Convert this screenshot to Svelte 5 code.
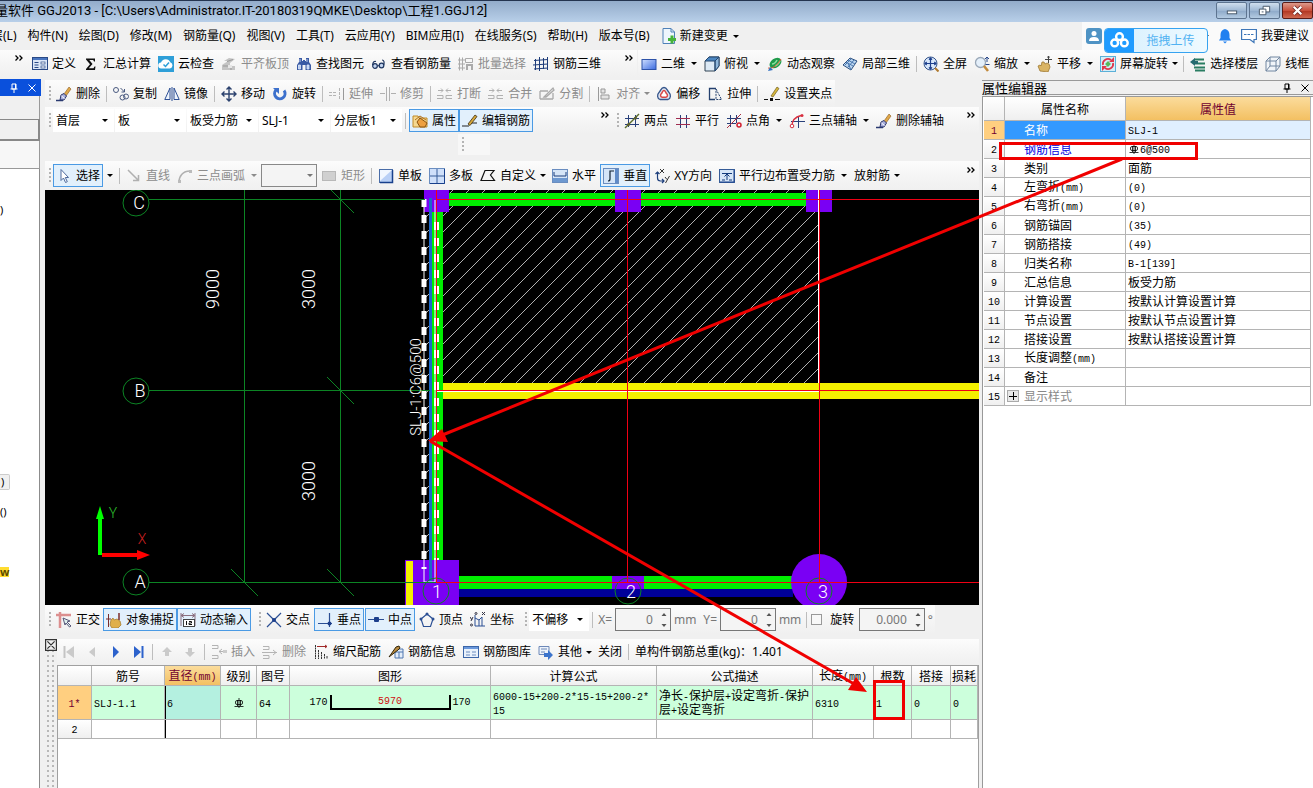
<script>
  const icons = {
    define: '<rect x=".5" y="1.500" width="15" height="12" fill="#dbe6f7" stroke="#2b4a86"/><rect x="1" y="2" width="14" height="2" fill="#4a76c0"/><path d="M2.500 6.500h4m-4 2.500h4m-4 2.500h4" stroke="#2b4a86"/><rect x="9" y="6" width="4" height="2" fill="#fff" stroke="#2b4a86" stroke-width=".7"/><rect x="9" y="10" width="4" height="2" fill="#fff" stroke="#2b4a86" stroke-width=".7"/>',
    sigma: '<path d="M3 2.500h9v3h-1l-.8-1.500H6.300L9.500 8l-3.700 4.200h4.700l1-1.700h1l-.5 3.500H3v-1L7 8.300 3 3.500z" fill="#111"/>',
    cloud: '<rect width="16" height="16" fill="#2e9fd8"/><path d="M3.500 12.500a3 3 0 0 1-.5-6 5 5 0 0 1 9.300-.3 3.300 3.300 0 0 1-.3 6.300z" fill="#fff"/><path d="M5.500 8.500l2 2 3.500-4" fill="none" stroke="#2e9fd8" stroke-width="1.500"/>',
    level: '<path d="M1 14V9l6-4h-4l5-3 6 1-5 4v3h5v4z" fill="#c4c4c4"/><path d="M2 10h8v4M6 5.500l6-2" stroke="#999" fill="none"/><rect x="7" y="9" width="4" height="3" fill="#e6e6e6"/>',
    find: '<path d="M3 2h3v3h1V4h2v1h1V2h3v4l2 3v5H9.500V9h-3v5H1V9l2-3z" fill="#3a5aa4"/><path d="M2.500 9h2v4h-2zM11 9h2v4h-2zM4 3v3M11 3v3" fill="#b9cff2" stroke="#dfe9fa" stroke-width=".8"/>',
    glasses: '<g fill="#c4d5f0" stroke="#1d3560" stroke-width="1.200"><circle cx="4" cy="10" r="2.300"/><circle cx="10.500" cy="9.500" r="2.300"/><path d="M6.300 10l2-.5M1.600 9C2 6 3 5 5 5.500M12.800 9c.7-3 .2-5-1.800-5" fill="none"/></g>',
    batch: '<g fill="none" stroke="#aaa"><path d="M1.500 1.500v13M4.500 1.500v13M0 4h7M0 8h7M0 12h7M7.500 2.500h7v4h-7z"/><path d="M9 14V9h5v5" stroke-width="2"/></g>',
    cage: '<path d="M2.500 3v11M6.500 1v14M10.500 2v11M14.500 1v13M1 4.500l14-1M0 9l15-1M1 13l14-1" stroke="#1e3c7a" fill="none"/>',
    rect2d: '<defs><linearGradient id="g2" x2="1" y2="1"><stop stop-color="#cfdfff"/><stop offset="1" stop-color="#3b6be0"/></linearGradient></defs><rect x="1" y="3.500" width="14" height="10" fill="url(#g2)" stroke="#2d52a8"/>',
    cube: '<path d="M1 5l4-4h10v9l-4 5H1z" fill="#dce9f5" stroke="#345"/><path d="M1 5l4-4h10l-4 4z" fill="#4c86c0" stroke="#24466e"/><path d="M11 5v10M11 5l4-4v9l-4 5z" fill="#8fb6da" stroke="#24466e"/>',
    orbit: '<ellipse cx="8.500" cy="7" rx="6.500" ry="4.500" transform="rotate(-35 8.500 7)" fill="#1f9a4a"/><path d="M5 8c2 0 4-2 5-4M8 10c3-1 4-3 5-5" stroke="#8ce0a0" stroke-width="1.500" fill="none"/><path d="M1 12c4 1 9-2 13-9" stroke="#e2603a" fill="none"/><path d="M1 15l5-1-3-3z" fill="#2f6fc0"/>',
    local3d: '<path d="M1 9l7-7 7 3-6 9z" fill="#bcd6f0" stroke="#2a4f80"/><path d="M4 6l7 4M6 4l7 4M3 9l6-6M6 11l6-7M9 14l-3-7" stroke="#4a78b0" fill="none"/>',
    full: '<circle cx="7.500" cy="7.500" r="6.500" fill="#d9e8fb" stroke="#35558c"/><path d="M7.500 2v11M2 7.500h11M6 3.700L7.500 2 9 3.700M6 11.300L7.500 13 9 11.300M3.700 6L2 7.500 3.700 9M11.300 6L13 7.500 11.300 9" stroke="#1d3f8c" fill="none" stroke-width="1.200"/><path d="M12 12l3.500 3.500" stroke="#b07a30" stroke-width="2"/>',
    zoomi: '<circle cx="6.500" cy="6.500" r="5" fill="#e4effa" stroke="#9aa8b8" stroke-width="1.300"/><path d="M10 10l4 5" stroke="#c28a3c" stroke-width="2.500"/><path d="M13 1v5M11 3l2-2 2 2M11.500 8.500h4" stroke="#26468a" fill="none"/>',
    pan: '<path d="M3 15l-2-5 2-1 1 1 1-4 2 0 1 2 2-1 2 1 1 3-2 5z" fill="#d9b465" stroke="#a07a34" stroke-width=".8"/><path d="M11.500 0v7M8 3.500h7M10.500 1.500l1-1.500 1 1.500" stroke="#444" fill="none"/>',
    srot: '<rect x=".5" y=".5" width="15" height="15" fill="#d5eef8" stroke="#5bb0d8"/><path d="M3 9a5 5 0 0 1 8-5M13 7a5 5 0 0 1-8 5" stroke="#e0384c" stroke-width="1.800" fill="none"/><path d="M9 6h5V1zM7 10H2v5z" fill="#e0384c"/><path d="M6.500 9.500l3-3" stroke="#57ba5a" stroke-width="4"/>',
    floors: '<path d="M4 3.500h10M5 7.500h10M4 11.500h11M5 14.500h10" stroke="#2a7d62" stroke-width="2"/><path d="M0 6l5-4v3h3v3H5v2z" fill="#256a70"/>',
    wire: '<g fill="#f1f5f9" stroke="#7186a0"><path d="M1 5l4-4h10v9l-4 5H1z"/><path d="M1 5h10v10M11 5l4-4M5 1v9h10M5 10l-4 5" fill="none"/></g>',
    erase: '<path d="M8 8l5-7 2 2-5 7z" fill="#e0a848" stroke="#8a5a20" stroke-width=".6"/><path d="M5 9l3-1.500L10.500 10 8 14H4z" fill="#a9b0de" stroke="#30386c"/><path d="M5.500 10l3 2.500" stroke="#fff"/><path d="M0 14.500h7" stroke="#2a3a70" stroke-width="1.500"/>',
    copy: '<g fill="none" stroke="#4a5a80"><circle cx="3" cy="4" r="2.500"/><circle cx="9.500" cy="11.500" r="2.500"/><circle cx="13" cy="10.500" r="2.500"/><path d="M7.500 2l4 4m0-3v3H8.500"/></g>',
    mirror: '<path d="M6 2v11.500H.8zM10 2v11.500h5.200z" fill="#eef4fc" stroke="#2d4f94"/><path d="M8 1v14" stroke="#2d4f94"/>',
    move: '<path d="M8 1v14M1 8h14M5.500 3.500L8 1l2.500 2.500M5.500 12.500L8 15l2.500-2.500M3.500 5.500L1 8l2.500 2.500M12.500 5.500L15 8l-2.500 2.500" fill="none" stroke="#2c426e" stroke-width="1.400"/>',
    rotate: '<path d="M4 4a5.200 5.200 0 1 0 8 .5" fill="none" stroke="#3c70cc" stroke-width="3"/><path d="M1 2h6v6z" fill="#3c70cc"/>',
    extend: '<path d="M0 6.500h8M0 9.500h8M10.500 2v12" stroke="#b4b4b4" fill="none" stroke-dasharray="3 1"/><path d="M14.500 2v12" stroke="#999"/>',
    trim: '<path d="M0 7.500h5M6.500 1v14M9.500 1v14M11 7.500h5" stroke="#b0b0b0" fill="none"/>',
    brk: '<path d="M1 4.500h5M9 4.500h5M4 2.500l2 2-2 2M11 2.500l-2 2 2 2M0 9.500h6v3H0M15 9.500H9v3h6" stroke="#b0b0b0" fill="none"/>',
    split: '<path d="M1 5h8M1 13h13M1 5v8M14 7v6M5 11l9-9 1 2-8 7z" fill="none" stroke="#aaa" stroke-width="1.300"/>',
    align: '<path d="M2.500 1v14" stroke="#999"/><path d="M5 3h4v4H5zM5 9h8v4H5z" fill="#e4e4e4" stroke="#999"/>',
    offset: '<path d="M8 1.500c3 0 3 3 5 5s2 6-1 7H4c-3-1-3-5-1-7s2-5 5-5z" fill="#dfe6f2" stroke="#36568c" stroke-width="1.300"/><path d="M8 4.500c1.500 0 1.500 2 2.800 3.300s.5 3.500-1 3.500H6.200c-1.500 0-2.300-2.200-1-3.500S6.500 4.500 8 4.500z" fill="#fff" stroke="#d84848" stroke-width="1.500"/>',
    stretch: '<path d="M9 2.500H2.500v11H8" fill="none" stroke="#24406e" stroke-width="1.300"/><path d="M9 3l5.500 10.500H9z" fill="none" stroke="#24406e" stroke-dasharray="2 1"/>',
    grip: '<path d="M7 10l6-9 2 1.500L9 11z" fill="#d7b73c" stroke="#5a4a10" stroke-width=".6"/><rect x="6" y="12" width="3" height="3" fill="#111"/><path d="M0 13.500h4M11 13.500h5" stroke="#111"/>',
    prop: '<path d="M1 3h5l1 2h8v9H1z" fill="#f5d890" stroke="#c08a28"/><path d="M5 9l3-4 7 5-2 4H8z" fill="#eda040" stroke="#8a5410"/><path d="M3 7l5-4 6 4" stroke="#b07020" fill="none"/>',
    edit: '<path d="M0 13h7M9 10l6 0" stroke="#222"/><path d="M6 11l7-9 2 1.500L8 12.500z" fill="#d7a93c" stroke="#3c2c10" stroke-width=".8"/>',
    twopt: '<path d="M4.500 2v12M11.500 2v12M1 5.500h14M1 11.500h14" stroke="#28407a" fill="none"/><path d="M1 15L15 1" stroke="#5b6c2c" stroke-width="1.500"/><circle cx="4.500" cy="11.500" r="1.500" fill="#5b5c2c"/><circle cx="11.500" cy="5" r="1.500" fill="#5b5c2c"/>',
    par: '<path d="M5.500 2v13M11.500 2v13" stroke="#28407a" fill="none"/><path d="M1 5.500h14M1 11.500h14" stroke="#a02c50"/>',
    ang: '<path d="M4.500 2v12M10.500 2v8M1 5.500h14M1 10.500h9" stroke="#28407a" fill="none"/><path d="M1 15L15 1" stroke="#a83040"/><circle cx="13" cy="12" r="2" fill="none" stroke="#d02030" stroke-width="1.500"/>',
    arc3: '<path d="M9.500 3v12M2 8.500h14" stroke="#28407a"/><path d="M3 13C3 7 6 4 12 2.500" stroke="#d83040" fill="none" stroke-width="1.300"/><circle cx="3" cy="13" r="1.800" fill="#fff" stroke="#d83040"/><circle cx="13" cy="2.500" r="1.500" fill="#d83040"/>',
    arrow: '<path d="M5 1.500v11l2.500-2.500 2 4.500 1.800-.8-2-4.200h3.200z" fill="#fff" stroke="#4e6a9c"/>',
    line: '<path d="M2 2l10 10M12.500 7v5.500H7" stroke="#b0b0b0" stroke-width="1.500" fill="none"/>',
    arc: '<path d="M2 14C2 8 6 3 13 3" stroke="#b0b0b0" stroke-width="1.500" fill="none"/><rect x="1" y="12" width="3" height="3" fill="#bbb"/><rect x="12" y="2" width="3" height="3" fill="#bbb"/>',
    grect: '<rect x="1.500" y="3.500" width="13" height="9" fill="#d0d0d0" stroke="#b8b8b8"/>',
    single: '<rect x="1.500" y="1.500" width="13" height="13" fill="#b9d0f6" stroke="#4a6da8"/><path d="M14.500 2v12.500H2" stroke="#18408c" stroke-width="1.500" fill="none"/><path d="M2 2h12L2 13z" fill="#f1f7ff"/>',
    multi: '<rect x=".5" y=".5" width="15" height="15" fill="#cfe0fa" stroke="#6a8dc0"/><path d="M8 1v14M1 8h14" stroke="#365c98"/><path d="M15.500 1v14.500H1" stroke="#18408c" fill="none"/>',
    custom: '<path d="M5 2.500h9L10.500 7l4 5.500H1z" fill="none" stroke="#111" stroke-width="1.200"/>',
    horiz: '<rect x=".5" y="1.500" width="15" height="13" fill="#d6e5f7" stroke="#6a8dc0"/><path d="M2 4v4h12V4" stroke="#1d3f7c" fill="none"/><rect x="1" y="10" width="14" height="4" fill="#6d98d0"/>',
    vert: '<rect x=".5" y=".5" width="15" height="15" fill="#d5e5f8" stroke="#6a8dc0"/><path d="M11 3H7v8q0 2-2 2" stroke="#123" fill="none" stroke-width="1.200"/><rect x="12" y="1" width="3" height="14" fill="#5f8bc8"/>',
    xy: '<path d="M3.500 4v6q0 3 3 3h3M1.500 6l2-2 2 2M8 11l2 2-2 2" stroke="#1d3f7c" fill="none" stroke-width="1.200"/><path d="M6 1l4 4M10 1L6 5M11 9l2 2.500M15.500 8l-4 7" stroke="#333" fill="none"/>',
    edges: '<rect x=".5" y="1.500" width="15" height="13" fill="#d6e5f7" stroke="#365c98"/><path d="M3 5.500h10M8 6v6M5.500 8.500L8 6l2.500 2.500M3 12h3m4 0h3" stroke="#123a7c" fill="none"/><path d="M15 2v12H1" stroke="#18408c" fill="none"/>',
    ortho: '<path d="M0 3h15M4 0v16" stroke="#dc8f8f" stroke-width="2.500"/><path d="M7 6l7 3-3 1 4 4-1.500 1-3.500-4-1 2z" fill="#dff0ee" stroke="#557"/>',
    osnap: '<path d="M2.500 2v13M0 7h5" stroke="#7a2c2c"/><path d="M4 13l1-5 2-2 1 2 3-1 3 2 1 4-3 3H6z" fill="#e0b04a" stroke="#a88034" stroke-width=".8"/><path d="M13 1v7" stroke="#7a2c2c" stroke-width="1.500"/>',
    dyn: '<path d="M1 1v13M15 1v13M1 3.500h14M4 1.500L1 3.500l3 2M12 1.500l3 2-3 2" stroke="#8c7080" fill="none"/><rect x="3.500" y="7.500" width="11" height="7" fill="#fff" stroke="#444"/><path d="M6.500 9v4M9 9.500h2.500v1.500H9v1.500h3" stroke="#111" fill="none"/>',
    cross: '<path d="M1 1l14 14M15 1L1 15" stroke="#2b4f94" stroke-width="1.200"/><circle cx="8" cy="8" r="2" fill="#1d3f8c"/>',
    perp: '<path d="M12.500 1v14M1 11.500h14" stroke="#2b4f94" stroke-width="1.200"/><circle cx="12.500" cy="11.500" r="2" fill="#1d3f8c"/>',
    mid: '<path d="M0 7.500h16" stroke="#2b4f94"/><rect x="6" y="5" width="5" height="5" rx="1" fill="#1d3f8c"/>',
    vertex: '<path d="M8 2l6 5-2.500 7.500h-7L2 7z" fill="none" stroke="#2b4f94" stroke-width="1.200"/><g fill="#2b4f94"><circle cx="8" cy="2" r="1.500"/><circle cx="14" cy="7" r="1.500"/><circle cx="2" cy="7" r="1.500"/></g>',
    coord: '<path d="M5 3v11h10M5 6l4 2 3-3M9 8v6M12 5v9" stroke="#2b4f94" fill="none"/><g fill="none" stroke="#334"><circle cx="1.500" cy="13" r="1"/><circle cx="6" cy="1.500" r="1"/><path d="M0 5l2 3M3 5L1 9M12 0l3 3M15 0l-3 3"/></g>',
    first: '<path d="M3.500 2v12" stroke="#c4c4c4" stroke-width="2"/><path d="M13 2v12L5 8z" fill="#cacaca"/>',
    prev: '<path d="M11 3v10L5 8z" fill="#cacaca"/>',
    next: '<path d="M6 2v12l6-6z" fill="#2c62cc"/>',
    last: '<path d="M12.500 2v12" stroke="#2c62cc" stroke-width="2"/><path d="M4 2v12l7-6z" fill="#2c62cc"/>',
    up: '<path d="M8 3l5 5h-3v4H6V8H3z" fill="#cacaca"/>',
    down: '<path d="M8 13l5-5h-3V4H6v4H3z" fill="#cacaca"/>',
    insert: '<path d="M1 1.500h6v3H1M1 11.500h6v3H1M16 7.500H8M11 5L8 7.500 11 10" stroke="#b4b4b4" fill="none"/><rect x="12" y="6" width="4" height="3" fill="#ccc"/>',
    remove: '<path d="M1 2.500h6v3H1M1 11.500h6v3H1M0 8.500h15M11 6l3 2.500-3 2.500" stroke="#b4b4b4" fill="none"/>',
    scale: '<path d="M2.500 1v14M5.500 6v9M8.500 8v7M11.500 10v5M14 12v3" stroke="#333" stroke-dasharray="2 .5"/><path d="M4 2.500h10M12 1l2 1.500L12 4" stroke="#a02828" fill="none"/>',
    info: '<path d="M7 5h8v9H7zM7 8h8M11 8v6" fill="#e3edf9" stroke="#4f77b0"/><path d="M1 13L8 3l3-1 1 2-2 2z" fill="#b88a40" stroke="#33270c"/>',
    lib: '<rect x=".5" y="2.500" width="15" height="11" fill="#e9f1fb" stroke="#3c66a8"/><rect x="1" y="3" width="14" height="2" fill="#6a98dc"/><path d="M3 8h4m2 0h4M3 11h4m2 0h4" stroke="#6a8cc0"/>',
    other: '<path d="M1 2.500h10v8H1zM3 5h6M3 8h4" fill="#edf3fb" stroke="#6d88b8"/><path d="M6 9h4V6l5 5-5 5v-3H6z" fill="#3c74cc"/>',
    newdoc: '<path d="M2 .5h8L13.500 4v11.500H2z" fill="#eef6fd" stroke="#4f81b8"/><path d="M10 .5V4h3.500" fill="none" stroke="#4f81b8"/><path d="M9.500 7.500h3v2.500H15v3h-2.500v2.500h-3V13H7v-3h2.500z" fill="#46b33a"/>',
    user: '<rect width="16" height="16" rx="3" fill="#4f93c4"/><circle cx="8" cy="5.500" r="2.500" fill="#fff"/><path d="M3 13q0-4 5-4t5 4z" fill="#fff"/>',
    bell: '<path d="M8 1q4.500 1 4.500 6v3l1.500 2.500H2L3.500 10V7Q3.500 2 8 1z" fill="#2080f0"/><path d="M6 13.500h4L8 15.500z" fill="#2080f0"/>',
    bubble: '<path d="M.6 1.500h14.800v10H13v3l-4-3H.6z" fill="#fff" stroke="#3f77b8" stroke-width="1.200"/><path d="M3 6.500h2.500m1 0H9m1 0h2.500" stroke="#3f77b8"/>'
  };

  const menus = ['层(L)', '构件(N)', '绘图(D)', '修改(M)', '钢筋量(Q)', '视图(V)', '工具(T)', '云应用(Y)', 'BIM应用(I)', '在线服务(S)', '帮助(H)', '版本号(B)'];

  // Entries: [icon, label, flags] — g: greyed, on: pressed, s: split arrow, m: menu arrow, o: arrow outside the frame
  const mainBar = [['define', '定义'], ['sigma', '汇总计算'], ['cloud', '云检查'], ['level', '平齐板顶', 'g'], ['find', '查找图元'], ['glasses', '查看钢筋量'], ['batch', '批量选择', 'g'], ['cage', '钢筋三维']];
  const viewBar = [['rect2d', '二维', 's'], ['cube', '俯视', 's'], ['orbit', '动态观察'], ['local3d', '局部三维'], null, ['full', '全屏'], ['zoomi', '缩放', 's'], ['pan', '平移', 's'], ['srot', '屏幕旋转', 'm'], null, ['floors', '选择楼层'], ['wire', '线框']];
  const editBar = [['erase', '删除'], null, ['copy', '复制'], ['mirror', '镜像'], null, ['move', '移动'], ['rotate', '旋转'], null, ['extend', '延伸', 'g'], ['trim', '修剪', 'g'], null, ['brk', '打断', 'g'], ['brk', '合并', 'g'], ['split', '分割', 'g'], null, ['align', '对齐', 'g m'], ['offset', '偏移'], ['stretch', '拉伸'], null, ['grip', '设置夹点']];
  const combos = [['楼层', '首层', 'short'], ['构件类型', '板', ''], ['构件', '板受力筋', ''], ['名称', 'SLJ-1', ''], ['分层', '分层板1', '']];
  const axisBar = [['twopt', '两点'], ['par', '平行'], ['ang', '点角', 's'], ['arc3', '三点辅轴', 's'], ['erase', '删除辅轴']];
  const drawA = [['arrow', '选择', 'on o'], null, ['line', '直线', 'g'], ['arc', '三点画弧', 'g s']];
  const drawB = [['grect', '矩形', 'g'], null, ['single', '单板'], ['multi', '多板'], ['custom', '自定义', 'm'], ['horiz', '水平'], ['vert', '垂直', 'on'], ['xy', 'XY方向'], ['edges', '平行边布置受力筋', 's'], ['', '放射筋', 'm']];
  const snapA = [['ortho', '正交'], ['osnap', '对象捕捉', 'on'], ['dyn', '动态输入', 'on']];
  const snapB = [['cross', '交点'], ['perp', '垂点', 'on'], ['mid', '中点', 'on'], ['vertex', '顶点'], ['coord', '坐标']];
  const rebarBar = [['first', ''], ['prev', ''], ['next', ''], ['last', ''], null, ['up', ''], ['down', ''], null, ['insert', '插入', 'g'], ['remove', '删除', 'g'], ['scale', '缩尺配筋'], ['info', '钢筋信息'], ['lib', '钢筋图库'], ['other', '其他', 'm'], ['', '关闭'], null];

  const props = [['名称', 'SLJ-1'], ['钢筋信息', 'Φ6@500'], ['类别', '面筋'], ['左弯折(mm)', '(0)'], ['右弯折(mm)', '(0)'], ['钢筋锚固', '(35)'], ['钢筋搭接', '(49)'], ['归类名称', 'B-1[139]'], ['汇总信息', '板受力筋'], ['计算设置', '按默认计算设置计算'], ['节点设置', '按默认节点设置计算'], ['搭接设置', '按默认搭接设置计算'], ['长度调整(mm)', ''], ['备注', ''], ['显示样式', '']];
  const cols = [['', 34], ['筋号', 73], ['直径(mm)', 56], ['级别', 36], ['图号', 33], ['图形', 201], ['计算公式', 166], ['公式描述', 156], ['长度(mm)', 61], ['根数', 38], ['搭接', 39], ['损耗', 0]];
  const runs = (t) => t.split(/([\x20-\x7e]+|Φ)/).filter(Boolean);
  const has = (f, k) => (f ?? '').split(' ').includes(k);
</script>

{#snippet icon(name)}
  <svg class="ic" viewBox="0 0 16 16" aria-hidden="true">{@html icons[name]}</svg>
{/snippet}

{#snippet caret()}
  <svg class="caret" viewBox="0 0 6 3" aria-hidden="true"><path d="M0 0h6L3 3z" fill="currentColor" /></svg>
{/snippet}

{#snippet bar(items)}
  {#each items as it}
    {#if it}
      <button class="item" class:grey={has(it[2], 'g')} class:on={has(it[2], 'on')}>
        {#if it[0]}{@render icon(it[0])}{/if}
        {#if it[1]}<span>{it[1]}</span>{/if}
        {#if has(it[2], 's')}<i class="split">{@render caret()}</i>{/if}
        {#if has(it[2], 'm')}<i class="drop">{@render caret()}</i>{/if}
      </button>
      {#if has(it[2], 'o')}<button class="item more" aria-label="更多">{@render caret()}</button>{/if}
    {:else}
      <span class="sep"></span>
    {/if}
  {/each}
{/snippet}

{#snippet chevrons()}
  <svg class="chev" viewBox="0 0 8 6" aria-hidden="true"><path d="M.5 .5L3 3 .5 5.500M4.500 .5L7 3 4.500 5.500" fill="none" stroke="#000" stroke-width="1.300" /></svg>
{/snippet}

{#snippet rebar()}
  <svg class="rebar" viewBox="0 0 12 12" aria-label="钢筋级别"><path d="M6 1v10M1.500 9.500h9M4.500 3v6M7.500 3v6" fill="none" stroke="#000" stroke-width=".8" /><rect x="2.500" y="3.500" width="7" height="4" rx="1.500" fill="none" stroke="#000" stroke-width=".8" /></svg>
{/snippet}

{#snippet song(t)}
  {#each runs(t) as r}{#if r === 'Φ'}{@render rebar()}{:else if /^[\x20-\x7e]/.test(r)}<span class="mono">{r}</span>{:else}{r}{/if}{/each}
{/snippet}

{#snippet spin(label, value, wide)}
  <span class="spin" class:wide>
    <input type="text" aria-label={label} {value} disabled />
    <svg viewBox="0 0 8 18" aria-hidden="true"><path d="M1.500 5L4 2l2.500 3zM1.500 13L4 16l2.500-3z" fill="#555" /></svg>
  </span>
{/snippet}

<div class="app">
  <header class="title">
    <h1>量软件 GGJ2013 - [C:\Users\Administrator.IT-20180319QMKE\Desktop\工程1.GGJ12]</h1>
    <div class="win">
      <button aria-label="最小化"><svg viewBox="0 0 30 16"><rect x="10.500" y="8.500" width="10" height="3" fill="#fff" stroke="#456" /></svg></button>
      <button aria-label="还原"><svg viewBox="0 0 30 16"><path d="M13.500 3.500h7v6h-7z" fill="#fff" stroke="#456" /><path d="M9.500 6.500h7v6h-7z" fill="#fff" stroke="#456" /><path d="M12 9h2v1h-2z" fill="#456" /></svg></button>
      <button class="close" aria-label="关闭窗口"><svg viewBox="0 0 30 16"><path d="M11 4l8 8M19 4l-8 8" stroke="#622" stroke-width="4" /><path d="M11 4l8 8M19 4l-8 8" stroke="#fff" stroke-width="2.500" /></svg></button>
    </div>
  </header>

  <nav class="menu">
    {#each menus as m}<button>{m}</button>{/each}
    <button class="new">{@render icon('newdoc')}<span>新建变更</span><i class="split">{@render caret()}</i></button>
    <div class="account">
      <button class="user" aria-label="用户">{@render icon('user')}{@render caret()}</button>
      <button aria-label="通知">{@render icon('bell')}</button>
      <button class="talk">{@render icon('bubble')}<span>我要建议</span></button>
      <button class="upload">
        <svg viewBox="0 0 30 24" aria-hidden="true"><g fill="none" stroke="#fff" stroke-width="2.500"><circle cx="15" cy="8" r="3.500" /><circle cx="10" cy="14.500" r="3.500" /><circle cx="20" cy="14.500" r="3.500" /></g></svg>
        <span>拖拽上传</span>
      </button>
    </div>
  </nav>

  <div class="bar top">
    <div class="part lead">{@render chevrons()}</div>
    <div class="part first">{@render bar(mainBar)}<span class="push">{@render chevrons()}</span></div>
    <div class="part view">{@render bar(viewBar)}</div>
  </div>

  <div class="body">
    <aside class="side">
      <div class="cap">
        <svg viewBox="0 0 10 10" aria-hidden="true"><path d="M3 1h4v5H3zM1.500 6h7M5 6v4M6.500 1v5" fill="none" stroke="#fff" /></svg>
        <svg viewBox="0 0 10 10" aria-hidden="true"><path d="M1.500 1.500l7 7M8.500 1.500l-7 7" stroke="#fff" /></svg>
      </div>
      <div class="slot"></div><div class="slot raised"></div><div class="slot flat"></div>
      <div class="tree"><span>)</span><span class="sel">)</span><span>()</span><b>w</b></div>
    </aside>

    <main class="center">
      <div class="bar"><div class="part"><span class="grip"></span>{@render bar(editBar)}</div></div>
      <div class="bar">
        <div class="part combos">
          <span class="grip"></span>
          {#each combos as [label, value, cls]}
            <span class="combo {cls}"><select aria-label={label}><option>{value}</option></select>{@render caret()}</span>
          {/each}
          <span class="sep"></span>
          <span class="tight">{@render bar([['prop', '属性', 'on'], ['edit', '编辑钢筋', 'on']])}</span>
          <span class="push">{@render chevrons()}</span>
        </div>
        <div class="part fill"><span class="grip"></span>{@render bar(axisBar)}<span class="push">{@render chevrons()}</span></div>
      </div>
      <div class="spacer"><span class="stub"><span class="grip"></span></span></div>
      <div class="bar tall">
        <div class="part fill">
          <span class="grip"></span>{@render bar(drawA)}
          <span class="combo boxed"><select aria-label="画弧方式" disabled><option></option></select>{@render caret()}</span>
          {@render bar(drawB)}<span class="push">{@render chevrons()}</span>
        </div>
      </div>

      <svg class="cad" viewBox="45 190 934 415" role="img" aria-label="绘图区">
        <defs>
          <pattern id="hatch" width="16" height="16" patternUnits="userSpaceOnUse"><path d="M-1 4L4-1M2 17L17 2" stroke="#ddd" stroke-width=".8" /></pattern>
        </defs>
        <rect x="45" y="190" width="934" height="415" fill="#000" />
        <rect x="443" y="190" width="376" height="193" fill="url(#hatch)" />
        <rect x="424" y="200" width="8" height="380" fill="url(#hatch)" />
        <g fill="#00ee00"><rect x="449" y="193" width="358" height="13" /><rect x="432" y="212" width="11" height="348" /><rect x="459" y="576" width="334" height="13" /></g>
        <rect x="459" y="589" width="334" height="8" fill="#000098" />
        <rect x="443" y="383" width="536" height="16" fill="#f4f000" />
        <g fill="#7a00f4"><rect x="424" y="190" width="25" height="22" /><rect x="615" y="190" width="26" height="22" /><rect x="806" y="190" width="26" height="22" /><rect x="405" y="560" width="54" height="45" /><rect x="612" y="576" width="32" height="13" /><circle cx="819" cy="582" r="28" /></g>
        <rect x="406" y="561" width="7" height="44" fill="#f4f000" />
        <rect x="429" y="198" width="3" height="384" fill="#1c68c8" />
        <g fill="none" stroke="#fff">
          <path d="M424 200v382h11v-382M436 391.500h383M818.500 190v193" />
          <path d="M424 199v370" stroke-width="5" stroke-dasharray="8 8" />
          <path d="M436.500 222v338" stroke-width="5" stroke-dasharray="8 8" />
        </g>
        <g fill="none" stroke="#0c8424">
          <path d="M149 199.500h276M149 390.500h281M149 582.500h287M244.500 190v392M340.500 190v392" />
          <path d="M327 186l27 27M327 377l27 27M231 569l27 27M327 569l27 27" />
          <circle cx="136" cy="203" r="13" /><circle cx="136" cy="391" r="13" /><circle cx="136" cy="582" r="13" />
          <circle cx="436" cy="591" r="13" /><circle cx="628" cy="591" r="13" /><circle cx="819" cy="591" r="13" />
        </g>
        <g fill="#f00014"><rect x="436" y="190" width="1" height="392" /><rect x="627" y="190" width="1" height="392" /><rect x="819" y="190" width="1" height="392" /><rect x="436" y="199" width="543" height="1" /><rect x="436" y="390" width="543" height="1" /><rect x="436" y="582" width="543" height="1" /></g>
        <path d="M98 555v-36h-2l4-13 4 13h-2v36z" fill="#00ff00" />
        <path d="M102 553h35v-3l13 5-13 5v-3h-35z" fill="#f00" />
        <g class="cadtext">
          <text x="139" y="209">C</text><text x="140" y="397">B</text><text x="140" y="588">A</text>
          <text x="437" y="598">1</text><text x="631" y="598">2</text><text x="823" y="598">3</text>
          <text transform="translate(219 289) rotate(-90)">9000</text>
          <text transform="translate(315 289) rotate(-90)">3000</text>
          <text transform="translate(315 481) rotate(-90)">3000</text>
          <text class="tag" transform="translate(421 387) rotate(-90)">SLJ-1:C6@500</text>
          <text class="axy" x="113" y="518">Y</text><text class="axx" x="142" y="544">X</text>
        </g>
      </svg>

      <div class="bar tall">
        <div class="part snap">
          <span class="grip"></span><span class="tight">{@render bar(snapA)}</span>
          <span class="grip next"></span>{@render bar(snapB)}
          <span class="grip next"></span>
          <span class="combo mini"><select aria-label="偏移方式"><option>不偏移</option></select>{@render caret()}</span>
          <span class="sep"></span>
          <span class="unit">X=</span>{@render spin('X', '0', false)}<span class="unit">mm</span>
          <span class="unit y">Y=</span>{@render spin('Y', '0', false)}<span class="unit">mm</span>
          <span class="sep"></span>
          <label class="check"><input type="checkbox" />旋转</label>{@render spin('旋转角度', '0.000', true)}<span class="unit">°</span>
        </div>
      </div>

      <section class="dock">
        <div class="rail">
          <svg viewBox="0 0 10 10" aria-hidden="true"><path d="M.5.5h9v9h-9zM2 2l6 6M8 2L2 8" fill="none" stroke="#333" /></svg>
        </div>
        <div class="sheet">
          <div class="bar steel"><div class="part fill">{@render bar(rebarBar)}<span class="total">单构件钢筋总重(kg)：1.401</span></div></div>
          <div class="scroll">
            <table class="grid">
              <colgroup>{#each cols as c}<col style={c[1] ? `width:${c[1]}px` : ''} />{/each}</colgroup>
              <thead><tr>{#each cols as c, i}<th class:hot={i === 2}>{@render song(c[0])}</th>{/each}</tr></thead>
              <tbody>
                <tr class="cur">
                  <th>{@render song('1*')}</th><td>{@render song('SLJ-1.1')}</td><td class="active">{@render song('6')}</td><td class="mid">{@render rebar()}</td><td>{@render song('64')}</td>
                  <td><div class="shape"><span class="mono">170</span><span class="bent"><span class="mono">5970</span></span><span class="mono">170</span></div></td>
                  <td>{@render song('6000-15+200-2*15-15+200-2*15')}</td><td>{@render song('净长-保护层+设定弯折-保护层+设定弯折')}</td>
                  <td>{@render song('6310')}</td><td>{@render song('1')}</td><td>{@render song('0')}</td><td>{@render song('0')}</td>
                </tr>
                <tr><th>{@render song('2')}</th>{#each cols.slice(1) as c, i}<td class:edge={i === 1}></td>{/each}</tr>
              </tbody>
            </table>
          </div>
        </div>
      </section>
    </main>

    <aside class="props">
      <div class="ptitle">
        <h2>属性编辑器</h2>
        <svg viewBox="0 0 10 10" aria-hidden="true"><path d="M3 1h4v5H3zM1.500 6h7M5 6v4M6.500 1v5" fill="none" stroke="#000" /></svg>
        <svg viewBox="0 0 10 10" aria-hidden="true"><path d="M1.500 1.500l7 7M8.500 1.500l-7 7" stroke="#000" /></svg>
      </div>
      <div class="pbody">
        <table>
          <colgroup><col class="n" /><col class="k" /><col /></colgroup>
          <thead><tr><th></th><th>属性名称</th><th class="hot">属性值</th></tr></thead>
          <tbody>
            {#each props as [k, v], i}
              <tr class:sel={i === 0} class:key={i === 1} class:dim={i === 14}>
                <th>{@render song(String(i + 1))}</th>
                <td>{#if i === 14}<button class="plus" aria-label="展开"></button>{/if}{@render song(k)}</td>
                <td>{@render song(v)}</td>
              </tr>
            {/each}
          </tbody>
        </table>
      </div>
    </aside>
  </div>

  <svg class="notes" width="1313" height="788" viewBox="0 0 1313 788" aria-hidden="true">
    <g fill="none" stroke="#f00000" stroke-width="3">
      <rect x="1000.500" y="143.500" width="196" height="15" />
      <rect x="874.500" y="681.500" width="29" height="37" />
      <path d="M1122 159L440 436M430 441L856 685" />
    </g>
    <path d="M428 441l14-12 6 13zM867 692l-19-2 8-13z" fill="#f00000" />
  </svg>
</div>

<style>
  :global(body) { margin: 0; background: #f0f0f0; }
  .app { position: relative; display: flex; flex-direction: column; min-height: 100vh; overflow: hidden; background: #f0f0f0; color: #000; font: 12px/16px "Noto Sans", "Noto Sans CJK SC", sans-serif; }
  button, input, select { font: inherit; color: inherit; margin: 0; padding: 0; border: 0; background: none; border-radius: 0; }
  h1, h2 { margin: 0; font: inherit; }
  svg { display: block; flex: none; }
  i { font-style: normal; }

  .title { display: flex; justify-content: space-between; box-sizing: border-box; height: 22px; border-top: 1px solid #24344f; background: linear-gradient(#93acca, #b8cfe9); overflow: hidden; }
  .title h1 { margin-left: -5px; font: 13px/20px Roboto, "Noto Sans CJK SC", sans-serif; white-space: nowrap; }
  .win { display: flex; gap: 2px; padding: 1px 0 3px; }
  .win button { width: 31px; border: 1px solid #5d7490; border-radius: 2px; background: linear-gradient(#cfdeee, #9fb8d4 50%, #8ca8c8 51%, #b4cbe2); }
  .win button svg { width: 29px; height: 15px; }
  .win .close { border-color: #5a1c18; background: linear-gradient(#dc9a8c, #c8503c 50%, #b03420 51%, #cf6850); }

  .menu { display: flex; align-items: center; height: 28px; gap: 11px; white-space: nowrap; }
  .menu > button:first-child { margin-left: -9px; }
  .menu .new { display: flex; align-items: center; gap: 3px; }
  .account { position: relative; display: flex; align-items: center; gap: 8px; height: 100%; margin-left: auto; padding: 0 4px; background: #fafafa; }
  .account .user { display: flex; align-items: center; gap: 101px; }
  .account .talk { display: flex; align-items: center; gap: 4px; }
  .upload { position: absolute; left: 22px; top: 6px; display: flex; align-items: center; box-sizing: border-box; width: 104px; height: 25px; border: 1px solid #36a3f0; border-radius: 4px; overflow: hidden; background: linear-gradient(90deg, #d5effe, #effaff); color: #51b2f2; z-index: 2; }
  .upload svg { width: 29px; height: 25px; background: #1f9bff; }
  .upload span { flex: 1; text-align: center; }

  .bar { display: flex; height: 27px; white-space: nowrap; }
  .bar.tall { height: 29px; }
  .part { display: flex; align-items: center; gap: 1px; background: linear-gradient(#fcfcfc, #f4f4f4 60%, #f0f0f0); }
  .fill, .view { flex: 1; min-width: 0; }
  .bar.top { margin-bottom: 2px; }
  .lead { box-sizing: border-box; width: 26px; padding-left: 15px; }
  .first { width: 608px; padding-left: 3px; margin-right: 1px; }
  .combos { width: 568px; }
  .chev { width: 8px; height: 6px; margin-bottom: 12px; }
  .push { margin-left: auto; padding-right: 4px; }
  .item { display: flex; align-items: center; gap: 4px; box-sizing: border-box; flex: none; height: 23px; padding: 0 2px; border: 1px solid transparent; }
  .item.on { border-color: #4a9ae4; background: #e2f0fc; }
  .item.grey { color: #8c8c8c; }
  .tight { display: flex; }
  .ic { width: 16px; height: 16px; }
  .caret { width: 6px; height: 3px; }
  .split { display: flex; width: 8px; justify-content: flex-end; }
  .drop { display: flex; width: 5px; }
  .more { width: 12px; padding: 0 2px; }
  .sep { flex: none; width: 1px; height: 16px; margin: 0 2px; background: #bdbdbd; }
  .grip { flex: none; width: 2px; height: 16px; margin: 0 1px 0 4px; background: repeating-linear-gradient(#b4b4b4 0 2px, transparent 2px 4px); }
  .grip.next { margin-left: 7px; }
  .combo { position: relative; display: flex; align-items: center; flex: none; width: 71px; height: 23px; background: #fff; }
  .combo.short { width: 61px; }
  .combo select { appearance: none; width: 100%; height: 100%; padding-left: 3px; outline: 0; }
  .combo .caret { position: absolute; right: 6px; pointer-events: none; }
  .combo.mini { width: 60px; }
  .combo.boxed { box-sizing: border-box; width: 56px; border: 1px solid #888; background: #f4f4f4; color: #777; }
  .combo.boxed .caret { right: 3px; }
  .spacer { display: flex; justify-content: center; height: 27px; }
  .stub { display: flex; align-items: center; width: 32px; height: 21px; margin-right: 76px; background: #f7f7f7; }

  .body { display: flex; flex: 1; }
  .side { display: flex; flex-direction: column; width: 40px; flex: none; }
  .cap { display: flex; justify-content: flex-end; align-items: center; gap: 8px; height: 17px; margin-right: -1px; padding-right: 4px; background: #0a50dc; }
  .cap svg, .ptitle svg { width: 10px; height: 10px; }
  .slot { box-sizing: border-box; height: 23px; border-right: 1px solid #999; background: #f0f0f0; }
  .slot.raised { height: 22px; border: solid #888; border-width: 1px 2px 2px 0; }
  .slot.flat { height: 28px; background: #f7f7f7; border-bottom: 1px solid #999; }
  .tree { flex: 1; display: flex; flex-direction: column; align-items: flex-start; border-right: 1px solid #8c8c8c; background: #fff; font-size: 11px; }
  .tree span:first-child { margin: 33px 0 256px; }
  .tree .sel { border: 1px solid #ccc; border-left: 0; border-radius: 0 2px 2px 0; background: #f0f0f0; padding: 0 5px 0 1px; margin-bottom: 14px; line-height: 14px; }
  .tree b { margin-top: 47px; line-height: 10px; color: #5a4a00; background: #ffdc30; }

  .center { display: flex; flex-direction: column; flex: 1; min-width: 0; padding: 1px 3px 0 5px; }
  .cad { width: 100%; height: auto; }
  .cadtext { font: 300 18px Roboto, sans-serif; fill: #fff; text-anchor: middle; }
  .cadtext .tag { font-size: 15px; }
  .cadtext .axy { font-size: 14px; fill: #2fc02f; }
  .cadtext .axx { font-size: 14px; fill: #d02020; }

  .snap { width: 890px; }
  .unit { color: #777; padding: 0 2px; }
  .unit.y { padding-left: 4px; }
  .spin { display: flex; align-items: center; box-sizing: border-box; width: 58px; height: 23px; padding-right: 2px; border: 1px solid #777; color: #777; background: #f4f4f4; }
  .spin.wide { width: 68px; }
  .spin input { flex: 1; width: 0; text-align: right; padding-right: 7px; }
  .spin svg { width: 8px; height: 18px; }
  .check { display: flex; align-items: center; gap: 8px; padding: 0 4px 0 1px; }
  .check input { appearance: none; width: 11px; height: 11px; border: 1px solid #999; background: #f8f8f8; box-sizing: border-box; }

  .dock { display: flex; flex: 1; margin-top: 5px; }
  .rail { width: 12px; flex: none; background: radial-gradient(circle at 2px 2px, #b8b8b8 1px, transparent 1px) 1px 15px / 5px 5px; background-clip: content-box; }
  .rail svg { width: 12px; height: 12px; background: #f0f0f0; }
  .sheet { display: flex; flex-direction: column; flex: 1; min-width: 0; }
  .bar.steel { height: 26px; }
  .bar.steel .part { padding-left: 1px; }
  .total { padding-left: 3px; }
  .scroll { flex: 1; border: solid #a0a0a0; border-width: 1px 1px 0 1px; background: #fff; overflow: hidden; }
  table { width: 100%; table-layout: fixed; border-collapse: separate; border-spacing: 0; font-size: 12px; line-height: 12px; font-family: "Noto Sans CJK SC", sans-serif; }
  th, td { box-sizing: border-box; padding: 0 0 0 2px; border: solid #b4b4b4; border-width: 0 1px 1px 0; text-align: left; font-weight: 400; white-space: nowrap; overflow: hidden; }
  th { padding: 0; text-align: center; background: linear-gradient(#fff, #efefef); }
  th.hot { background: linear-gradient(#fbdc9c, #f3c062); color: #700030; }
  .mono { font: 10px/10px "Liberation Mono", monospace; }
  .rebar { display: inline-block; width: 12px; height: 12px; vertical-align: -2px; }
  .grid thead tr { height: 20px; }
  .grid tbody tr { height: 19px; }
  .grid tbody tr.cur { height: 34px; background: #ccffdc; }
  .grid .cur td { padding-right: 2px; white-space: normal; word-break: break-all; }
  .grid .cur th { background: #ffcf80; color: #700030; }
  .grid td.active { background: #b4f0e0; }
  .grid td.active, .grid td.edge { box-shadow: inset 1px 0 #000; }
  .grid td.mid { text-align: center; }
  .shape { display: flex; justify-content: center; align-items: center; gap: 2px; }
  .bent { display: flex; justify-content: center; align-items: center; box-sizing: border-box; width: 121px; height: 15px; border: solid #000; border-width: 0 2px 2px; color: #d01010; }

  .props { display: flex; flex-direction: column; width: 331px; flex: none; font-family: "Noto Sans CJK SC", sans-serif; }
  .ptitle { display: flex; align-items: center; gap: 8px; box-sizing: border-box; height: 15px; margin-top: 1px; padding-right: 3px; border: solid #999; border-width: 1px 0; }
  .ptitle h2 { flex: 1; font-size: 13px; line-height: 13px; }
  .pbody { flex: 1; margin-top: 1px; border: solid #999; border-width: 1px 0 0 1px; padding: 0 2px 0 1px; background: #fff; }
  .pbody .n { width: 21px; }
  .pbody .k { width: 121px; }
  .pbody thead tr { height: 24px; }
  .pbody tbody tr { height: 19px; }
  .pbody td:nth-child(2) { position: relative; padding-left: 19px; }
  .pbody .sel th { background: #ffcf80; color: #700030; }
  .pbody .sel td:nth-child(2) { background: #3399ff; color: #fff; }
  .pbody .sel td:nth-child(3) { background: #e0efff; }
  .pbody .key td:nth-child(2) { color: #0000e0; }
  .pbody .dim td { color: #888; }
  .plus { position: absolute; left: 2px; top: 3px; width: 12px; height: 12px; border: 1px solid #aaa; background: linear-gradient(#000, #000) center / 8px 1px no-repeat, linear-gradient(#000, #000) center / 1px 8px no-repeat, #e8e8e8; }

  .notes { position: absolute; left: 0; top: 0; pointer-events: none; z-index: 3; }
</style>
